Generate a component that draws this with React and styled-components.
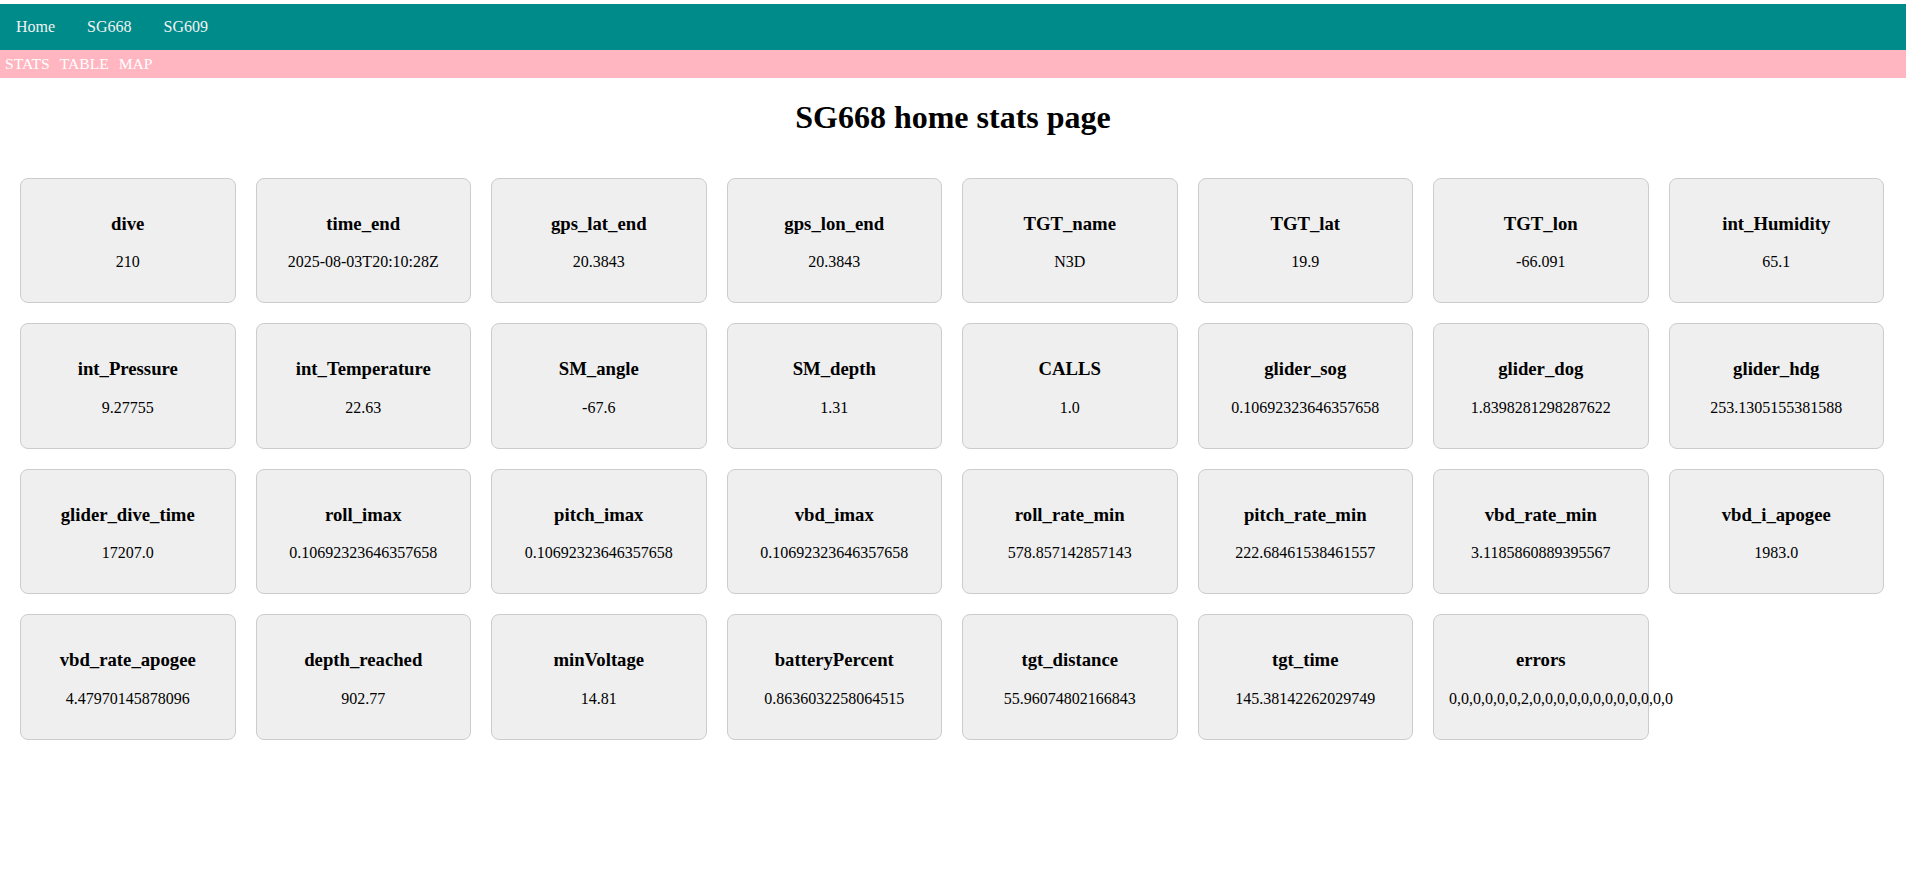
import React from 'react'
import styled, { createGlobalStyle } from 'styled-components'

const GlobalStyle = createGlobalStyle`
  body {
    margin: 0;
    background-color: #fff;
    font-family: "Liberation Serif", "Times New Roman", serif;
  }
`

const TopNav = styled.nav`
  margin-top: 4px;
  background-color: #008b8b;
  display: flex;
  a {
    color: #f2f2f2;
    padding: 14px 16px;
    font-size: 16px;
    text-decoration: none;
  }
`

const SubNav = styled.nav`
  background-color: #ffb6c1;
  height: 28px;
  display: flex;
  align-items: center;
  padding-left: 1px;
  a {
    color: #fff;
    font-size: 15.6px;
    padding: 0 4px;
    margin-right: 2px;
    text-decoration: none;
  }
`

const Title = styled.h1`
  text-align: center;
  font-size: 32px;
  margin: 21px 0;
`

const StatsGrid = styled.div`
  display: grid;
  grid-template-columns: repeat(8, 1fr);
  gap: 20px;
  padding: 21px 22px 20px 20px;
`

const StatCard = styled.div`
  background-color: #efefef;
  border: 1px solid #ccc;
  border-radius: 8px;
  padding: 15px;
  text-align: center;
  min-width: 0;
  h3 {
    font-size: 18.72px;
    margin: 18.72px 0;
  }
  p {
    font-size: 16px;
    margin: 16px 0;
    white-space: nowrap;
  }
`

const stats = [
  ['dive', '210'],
  ['time_end', '2025-08-03T20:10:28Z'],
  ['gps_lat_end', '20.3843'],
  ['gps_lon_end', '20.3843'],
  ['TGT_name', 'N3D'],
  ['TGT_lat', '19.9'],
  ['TGT_lon', '-66.091'],
  ['int_Humidity', '65.1'],
  ['int_Pressure', '9.27755'],
  ['int_Temperature', '22.63'],
  ['SM_angle', '-67.6'],
  ['SM_depth', '1.31'],
  ['CALLS', '1.0'],
  ['glider_sog', '0.10692323646357658'],
  ['glider_dog', '1.8398281298287622'],
  ['glider_hdg', '253.1305155381588'],
  ['glider_dive_time', '17207.0'],
  ['roll_imax', '0.10692323646357658'],
  ['pitch_imax', '0.10692323646357658'],
  ['vbd_imax', '0.10692323646357658'],
  ['roll_rate_min', '578.857142857143'],
  ['pitch_rate_min', '222.68461538461557'],
  ['vbd_rate_min', '3.1185860889395567'],
  ['vbd_i_apogee', '1983.0'],
  ['vbd_rate_apogee', '4.47970145878096'],
  ['depth_reached', '902.77'],
  ['minVoltage', '14.81'],
  ['batteryPercent', '0.8636032258064515'],
  ['tgt_distance', '55.96074802166843'],
  ['tgt_time', '145.38142262029749'],
  ['errors', '0,0,0,0,0,0,2,0,0,0,0,0,0,0,0,0,0,0,0'],
]

export default function App() {
  return (
    <>
      <GlobalStyle />
      <TopNav>
        <a href="#">Home</a>
        <a href="#">SG668</a>
        <a href="#">SG609</a>
      </TopNav>
      <SubNav>
        <a href="#">STATS</a>
        <a href="#">TABLE</a>
        <a href="#">MAP</a>
      </SubNav>
      <Title>SG668 home stats page</Title>
      <StatsGrid>
        {stats.map(([name, value]) => (
          <StatCard key={name}>
            <h3>{name}</h3>
            <p>{value}</p>
          </StatCard>
        ))}
      </StatsGrid>
    </>
  )
}
